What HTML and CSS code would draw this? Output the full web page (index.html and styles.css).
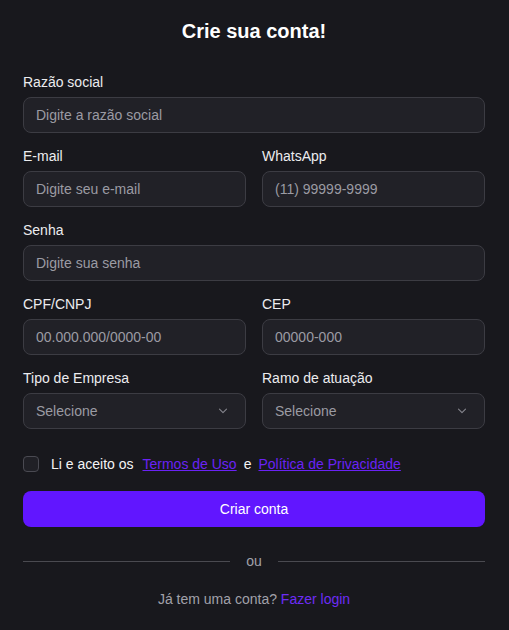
FILE: index.html
```html
<!DOCTYPE html>
<html lang="pt-BR">
<head>
<meta charset="utf-8">
<title>Crie sua conta!</title>
<link rel="stylesheet" href="styles.css">
</head>
<body>
<main class="card">
  <h1 class="title">Crie sua conta!</h1>
  <form class="form">
    <div class="field">
      <label class="label">Razão social</label>
      <div class="input"><span class="ph">Digite a razão social</span></div>
    </div>
    <div class="row">
      <div class="field">
        <label class="label">E-mail</label>
        <div class="input"><span class="ph">Digite seu e-mail</span></div>
      </div>
      <div class="field">
        <label class="label">WhatsApp</label>
        <div class="input"><span class="ph">(11) 99999-9999</span></div>
      </div>
    </div>
    <div class="field">
      <label class="label">Senha</label>
      <div class="input"><span class="ph">Digite sua senha</span></div>
    </div>
    <div class="row">
      <div class="field">
        <label class="label">CPF/CNPJ</label>
        <div class="input"><span class="ph">00.000.000/0000-00</span></div>
      </div>
      <div class="field">
        <label class="label">CEP</label>
        <div class="input"><span class="ph">00000-000</span></div>
      </div>
    </div>
    <div class="row">
      <div class="field">
        <label class="label">Tipo de Empresa</label>
        <div class="input select"><span class="ph">Selecione</span>
          <svg class="chev" width="10" height="6" viewBox="0 0 10 6"><path d="M1.5 1.2l3.5 3.5 3.5-3.5" fill="none" stroke="#85858d" stroke-width="1.1" stroke-linecap="round" stroke-linejoin="round"/></svg>
        </div>
      </div>
      <div class="field">
        <label class="label">Ramo de atuação</label>
        <div class="input select"><span class="ph">Selecione</span>
          <svg class="chev" width="10" height="6" viewBox="0 0 10 6"><path d="M1.5 1.2l3.5 3.5 3.5-3.5" fill="none" stroke="#85858d" stroke-width="1.1" stroke-linecap="round" stroke-linejoin="round"/></svg>
        </div>
      </div>
    </div>
    <div class="terms">
      <span class="checkbox"></span>
      <span class="terms-text">Li e aceito os</span>
      <a class="link" href="#">Termos de Uso</a>
      <span class="terms-text terms-and">e</span>
      <a class="link" href="#">Política de Privacidade</a>
    </div>
    <button type="button" class="btn">Criar conta</button>
    <div class="divider"><span class="line"></span><span class="or">ou</span><span class="line"></span></div>
    <p class="login">Já tem uma conta? <a class="login-link" href="#">Fazer login</a></p>
  </form>
</main>
</body>
</html>
```
FILE: styles.css
```css
* { box-sizing: border-box; }
html, body { margin: 0; padding: 0; }
body {
  background: #18181d;
  font-family: "Liberation Sans", Arial, sans-serif;
  color: #f4f4f5;
  width: 509px;
  height: 630px;
  overflow: hidden;
}
.card {
  padding: 17px 24px 0 23px;
}
.title {
  margin: 0;
  font-size: 20px;
  line-height: 28px;
  font-weight: 700;
  text-align: center;
  color: #ffffff;
}
.form {
  margin-top: 27px;
  display: flex;
  flex-direction: column;
  gap: 13px;
}
.row {
  display: grid;
  grid-template-columns: 1fr 1fr;
  gap: 16px;
}
.field {
  display: flex;
  flex-direction: column;
  gap: 5px;
}
.label {
  font-size: 14px;
  line-height: 20px;
  color: #ececef;
}
.input {
  height: 36px;
  border: 1px solid #3c3c43;
  border-radius: 8px;
  background: #212127;
  display: flex;
  align-items: center;
  padding: 0 12px;
  font-size: 14px;
}
.ph { color: #9b9ba3; }
.select { justify-content: space-between; padding-right: 17px; }
.chev { display: block; }
.terms {
  margin-top: 12px;
  display: flex;
  align-items: center;
  height: 20px;
  font-size: 14px;
}
.checkbox {
  width: 16px;
  height: 16px;
  border: 1px solid #4a4a52;
  border-radius: 4px;
  background: #202026;
  margin-right: 12px;
}
.terms-text { color: #f4f4f5; margin-right: 9px; }
.terms-and { margin-right: 7px; }
.link {
  color: #6a22f5;
  text-decoration: underline;
  margin-right: 7px;
}
.btn {
  margin-top: 4px;
  height: 36px;
  border: 0;
  border-radius: 8px;
  background: #6116ff;
  color: #ffffff;
  font-family: inherit;
  font-size: 14px;
  font-weight: 400;
}
.divider {
  margin-top: 11px;
  display: flex;
  align-items: center;
  gap: 16px;
  height: 20px;
}
.line { flex: 1; height: 1px; background: #4a4a50; }
.or { font-size: 14px; color: #a1a1aa; }
.login {
  margin: 5px 0 0;
  text-align: center;
  font-size: 14px;
  line-height: 20px;
  color: #a1a1aa;
}
.login-link { color: #6d2cf5; text-decoration: none; }
```
